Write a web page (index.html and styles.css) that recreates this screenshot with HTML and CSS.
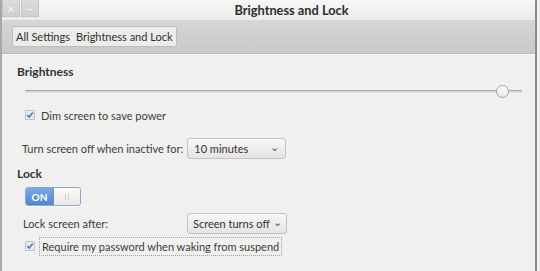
FILE: index.html
```html
<!DOCTYPE html>
<html>
<head>
<meta charset="utf-8">
<link rel="stylesheet" href="styles.css">
</head>
<body>
<div class="window">
  <div class="titlebar">
    <div class="wbtns">
      <span class="wbtn">×</span>
      <span class="wbtn">–</span>
    </div>
    <div class="title">Brightness and Lock</div>
  </div>
  <div class="toolbar">
    <div class="crumbs"><span>All Settings</span><span>Brightness and Lock</span></div>
  </div>
  <div class="content">
    <div class="heading">Brightness</div>
    <div class="slider"><div class="track"></div><div class="knob"></div></div>
    <label class="check dim"><span class="box"><svg width="10" height="10" viewBox="0 0 10 10"><path d="M1.5 5 L4 7.5 L8.5 2" fill="none" stroke="#4a7bb7" stroke-width="2"/></svg></span><span>Dim screen to save power</span></label>
    <div class="row r1"><span>Turn screen off when inactive for:</span><span class="combo c1">10 minutes<span class="arrow">⌄</span></span></div>
    <div class="heading lock">Lock</div>
    <div class="switch"><span class="on">ON</span><span class="off"><i></i><i></i></span></div>
    <div class="row r2"><span class="rlabel">Lock screen after:</span><span class="combo c2">Screen turns off<span class="arrow">⌄</span></span></div>
    <label class="check focus"><span class="box"><svg width="10" height="10" viewBox="0 0 10 10"><path d="M1.5 5 L4 7.5 L8.5 2" fill="none" stroke="#4a7bb7" stroke-width="2"/></svg></span><span class="lbl">Require my password when waking from suspend</span></label>
  </div>
</div>
</body>
</html>
```
FILE: styles.css
```css
* { box-sizing: border-box; }
html, body { margin: 0; padding: 0; background: #f0f0ef; }
body { font-family: Lato, "Open Sans", sans-serif; font-size: 11px; color: #3c3c3c; }
.window { width: 537px; height: 271px; border-left: 2px solid #a8a8a6; border-right: 2px solid #8c8c8a; background: #f0f0ef; display: flex; flex-direction: column; }
.titlebar { height: 20px; background: linear-gradient(#f7f7f6, #ebebea); display: flex; align-items: center; position: relative; }
.wbtns { display: flex; gap: 1px; height: 18px; align-self: flex-start; }
.wbtn { width: 18px; height: 17px; background: linear-gradient(#dcdcda, #cfcfcd); border: 1px solid #c4c4c2; border-top: none; color: #f4f4f4; font-size: 12px; font-weight: bold; display: flex; align-items: center; justify-content: center; }
.title { position: absolute; left: 0; right: 0; text-align: center; font-weight: bold; font-size: 12.8px; color: #2e2e2e; top: 2px; padding-left: 46px; }
.toolbar { height: 34px; background: linear-gradient(#d6d7d4, #c9cac7); border-bottom: 1px solid #b8b9b6; box-shadow: 0 1px 0 #f8f8f8; display: flex; align-items: center; padding-left: 10px; padding-bottom: 1px; }
.crumbs { display: flex; gap: 6px; background: #ececea; border: 1px solid #bdbdbb; border-radius: 2px; height: 21px; align-items: center; padding: 0 3px 0 3px; font-size: 11px; color: #2e2e2e; }
.content { padding: 11px 0 0 15px; display: flex; flex-direction: column; }
.heading { font-weight: bold; font-size: 12px; color: #333; height: 14px; line-height: 14px; }
.slider { position: relative; height: 12px; margin: 7px 0 0 8px; width: 497px; }
.track { position: absolute; left: 0; right: 0; top: 4px; height: 3px; background: #d4d4d2; border-top: 1px solid #a9a9a7; border-bottom: 1px solid #e0e0de; }
.knob { position: absolute; left: 471px; top: -1px; width: 13px; height: 13px; border-radius: 50%; background: linear-gradient(#ffffff, #e6e6e4); border: 1px solid #a4a4a2; }
.check { display: flex; align-items: center; gap: 6px; margin-left: 8px; height: 20px; }
.dim { margin-top: 7px; }
.box { width: 10px; height: 10px; border: 1px solid #b9c3d0; background: #e8ecf2; display: flex; align-items: center; justify-content: center; border-radius: 1px; }
.box svg { display: block; }
.row { display: flex; align-items: center; height: 21px; white-space: nowrap; }
.r1 { margin: 13px 0 0 5px; gap: 4px; }
.r2 { margin: 7px 0 0 6px; }
.rlabel { width: 164px; }
.combo { height: 21px; border: 1px solid #c2c2c0; border-radius: 3px; background: linear-gradient(#f7f7f6, #e4e4e2); display: flex; align-items: center; padding: 0 6px; position: relative; color: #333; }
.c1 { width: 99px; }
.c2 { width: 100px; padding: 0 5px; }
.arrow { position: absolute; right: 6px; top: 1px; font-size: 11px; color: #555; }
.c2 .arrow { position: static; margin-left: 3px; margin-top: -4px; }
.lock { margin-top: 8px; }
.switch { display: flex; width: 56px; height: 19px; margin: 6px 0 0 8px; border: 1px solid #8aa9d0; border-radius: 3px; overflow: hidden; box-shadow: 0 1px 0 #fff; }
.on { width: 27px; background: linear-gradient(#7aa8e6, #4d87d6); color: #fff; font-weight: bold; font-size: 10px; display: flex; align-items: center; justify-content: center; }
.off { flex: 1; background: linear-gradient(#fbfbfa, #e9e9e7); border-left: 1px solid #7c8ea8; display: flex; align-items: center; justify-content: center; gap: 2px; }
.off i { width: 1px; height: 6px; background: #d0d0ce; }
.focus { margin-top: 2px; }
.lbl { border: 1px dotted #a0a0a0; padding: 2px 2px; margin-left: -2px; }
```
